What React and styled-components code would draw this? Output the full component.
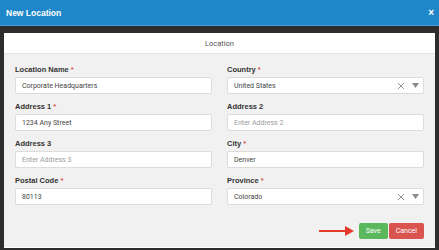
import React from "react";
import styled, { createGlobalStyle } from "styled-components";

const GlobalStyle = createGlobalStyle`
  html, body {
    margin: 0;
    padding: 0;
    background: #2d2d2d;
  }
  #root {
    width: 439px;
    height: 250px;
    overflow: hidden;
  }
`;

const fields = [
  { label: "Location Name", required: true, value: "Corporate Headquarters" },
  { label: "Country", required: true, value: "United States", select: true },
  { label: "Address 1", required: true, value: "1234 Any Street" },
  { label: "Address 2", placeholder: "Enter Address 2" },
  { label: "Address 3", placeholder: "Enter Address 3" },
  { label: "City", required: true, value: "Denver" },
  { label: "Postal Code", required: true, value: "80113" },
  { label: "Province", required: true, value: "Colorado", select: true },
];

const App = () => {
  return (
    <>
      <GlobalStyle />
      <Modal>
        <Header>
          <Title>New Location</Title>
          <Close>×</Close>
        </Header>
        <Body>
          <Panel>
            <TabBar>Location</TabBar>
            <Form>
              {fields.map((f, i) => (
                <Field key={i}>
                  <Label>
                    {f.label}
                    {f.required && <Req> *</Req>}
                  </Label>
                  <Input $placeholder={!f.value}>
                    <span>{f.value || f.placeholder}</span>
                    {f.select && (
                      <SelectIcons>
                        <svg width="8" height="8" viewBox="0 0 8 8">
                          <path
                            d="M1 1L7 7M7 1L1 7"
                            stroke="#8a8a8a"
                            strokeWidth="0.9"
                          />
                        </svg>
                        <svg width="7" height="7" viewBox="0 0 7 7">
                          <path d="M0 1H7L3.5 6Z" fill="#8a8a8a" />
                        </svg>
                      </SelectIcons>
                    )}
                  </Input>
                </Field>
              ))}
            </Form>
            <Footer>
              <svg width="36" height="12" viewBox="0 0 36 12">
                <path d="M0 6H28" stroke="#e53a2a" strokeWidth="2" />
                <path d="M26 1L35 6L26 11Z" fill="#e53a2a" />
              </svg>
              <Buttons>
                <Button $color="#5cb85c">Save</Button>
                <Button $color="#d9534f">Cancel</Button>
              </Buttons>
            </Footer>
          </Panel>
        </Body>
      </Modal>
    </>
  );
};

export default App;

const Modal = styled.div`
  width: 439px;
  height: 250px;
  display: flex;
  flex-direction: column;
  background: #2d2d2d;
`;

const Header = styled.div`
  height: 25px;
  background: #1f87c9;
  border-bottom: 1px solid #4c9fd4;
  display: flex;
  align-items: center;
  justify-content: space-between;
  padding: 0 5px 0 6px;
`;

const Title = styled.div`
  color: #fff;
  font-family: "Liberation Sans", Arial, sans-serif;
  font-weight: bold;
  font-size: 8.5px;
`;

const Close = styled.div`
  color: #fff;
  font-family: "Liberation Sans", Arial, sans-serif;
  font-weight: bold;
  font-size: 10px;
  line-height: 1;
`;

const Body = styled.div`
  padding: 7px 4px 0 4px;
`;

const Panel = styled.div`
  background: #f1f1f1;
  border-bottom: 1px solid #fff;
`;

const TabBar = styled.div`
  height: 20px;
  background: #fff;
  border-bottom: 1px solid #e4e4e4;
  display: flex;
  align-items: center;
  justify-content: center;
  font-family: "Roboto", sans-serif;
  font-size: 7.5px;
  color: #555;
`;

const Form = styled.div`
  display: grid;
  grid-template-columns: 1fr 1fr;
  column-gap: 15px;
  row-gap: 8px;
  padding: 11px 11px 0 11px;
`;

const Field = styled.div`
  display: flex;
  flex-direction: column;
  gap: 2px;
`;

const Label = styled.div`
  height: 10px;
  line-height: 10px;
  font-family: "Liberation Sans", Arial, sans-serif;
  font-weight: bold;
  font-size: 7.5px;
  color: #333;
`;

const Req = styled.span`
  color: #d9534f;
`;

const Input = styled.div`
  height: 15px;
  background: #fff;
  border: 1px solid #dcdcdc;
  border-radius: 2px;
  display: flex;
  align-items: center;
  justify-content: space-between;
  padding: 0 4px 0 6px;
  font-family: "Roboto", sans-serif;
  font-size: 7px;
  color: ${(p) => (p.$placeholder ? "#9a9a9a" : "#444")};
`;

const SelectIcons = styled.div`
  display: flex;
  align-items: center;
  gap: 7px;
`;

const Footer = styled.div`
  display: flex;
  justify-content: flex-end;
  align-items: center;
  gap: 4px;
  padding: 18px 11px 8px 0;
`;

const Buttons = styled.div`
  display: flex;
  gap: 1px;
`;

const Button = styled.div`
  height: 16px;
  padding: 0 7px;
  display: flex;
  align-items: center;
  background: ${(p) => p.$color};
  color: #fff;
  border-radius: 2px;
  font-family: "Roboto", sans-serif;
  font-size: 7px;
`;
